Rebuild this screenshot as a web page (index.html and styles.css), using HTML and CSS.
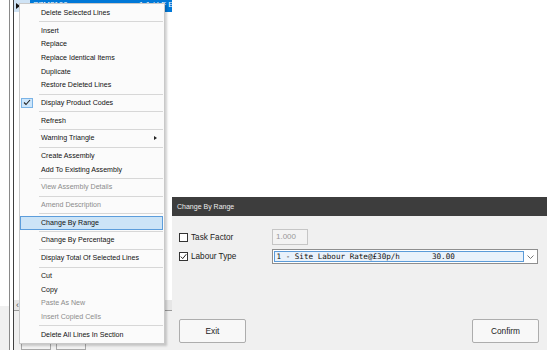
FILE: index.html
```html
<!DOCTYPE html>
<html>
<head>
<meta charset="utf-8">
<link rel="stylesheet" href="styles.css">
</head>
<body>
<div class="app">
  <div class="gutter"><div class="gutter-top"></div><div class="gutter-bottom"></div></div>
  <div class="frame">
    <div class="pane">
      <div class="rows">
        <div class="row selected">
          <div class="rh"><span class="row-arrow"></span></div>
          <div class="cell c1">SZM2100</div>
          <div class="cell c2">1.1 / LF ESD</div>
        </div>
      </div>
      <div class="hscroll"><span class="hs-arrow">‹</span></div>
      <div class="toolbar">
        <div class="tb-btn"><svg width="5" height="8" viewBox="0 0 5 8"><path d="M1 0V8M4 0V8" stroke="#444" stroke-width="1"/></svg></div>
        <div class="tb-btn"><svg width="10" height="8" viewBox="0 0 10 8"><path d="M0.5 0.5L5 7L9.5 0.5" stroke="#444" stroke-width="1" fill="none"/></svg></div>
      </div>
    </div>
  </div>
</div>

<div class="menu">
  <div class="mi">Delete Selected Lines</div>
  <div class="sep"></div>
  <div class="mi">Insert</div>
  <div class="mi">Replace</div>
  <div class="mi">Replace Identical Items</div>
  <div class="mi">Duplicate</div>
  <div class="mi">Restore Deleted Lines</div>
  <div class="sep"></div>
  <div class="mi"><span class="chk"><svg width="8" height="7" viewBox="0 0 8 7"><path d="M1 3.5L3 5.5L7 1" stroke="#222" stroke-width="1.1" fill="none"/></svg></span>Display Product Codes</div>
  <div class="sep"></div>
  <div class="mi">Refresh</div>
  <div class="sep"></div>
  <div class="mi sub">Warning Triangle<span class="sub-arrow"></span></div>
  <div class="sep"></div>
  <div class="mi">Create Assembly</div>
  <div class="mi">Add To Existing Assembly</div>
  <div class="sep"></div>
  <div class="mi disabled">View Assembly Details</div>
  <div class="sep"></div>
  <div class="mi disabled">Amend Description</div>
  <div class="sep"></div>
  <div class="mi hot">Change By Range</div>
  <div class="sep"></div>
  <div class="mi">Change By Percentage</div>
  <div class="sep"></div>
  <div class="mi">Display Total Of Selected Lines</div>
  <div class="sep"></div>
  <div class="mi">Cut</div>
  <div class="mi">Copy</div>
  <div class="mi disabled">Paste As New</div>
  <div class="mi disabled">Insert Copied Cells</div>
  <div class="sep"></div>
  <div class="mi">Delete All Lines In Section</div>
</div>

<div class="dialog">
  <div class="dlg-title">Change By Range</div>
  <div class="dlg-body">
    <div class="form">
      <div class="opt"><span class="cb"></span>Task Factor</div>
      <div class="textbox">1.000</div>
      <div class="opt"><span class="cb"><svg width="7" height="7" viewBox="0 0 7 7"><path d="M0.8 3.6L2.7 5.6L6.3 1.2" stroke="#222" stroke-width="1" fill="none"/></svg></span>Labour Type</div>
      <div class="combo">
        <div class="combo-text">1 - Site Labour Rate@£30p/h       30.00</div>
        <div class="combo-btn"><svg width="7" height="4" viewBox="0 0 7 4"><path d="M0.5 0.5L3.5 3.5L6.5 0.5" stroke="#777" stroke-width="1" fill="none"/></svg></div>
      </div>
    </div>
    <div class="actions">
      <div class="btn">Exit</div>
      <div class="btn">Confirm</div>
    </div>
  </div>
</div>
</body>
</html>
```

FILE: styles.css
```css
html, body {
  margin: 0;
  padding: 0;
}
body {
  width: 547px;
  height: 350px;
  overflow: hidden;
  position: relative;
  background: #ffffff;
  font-family: "Liberation Sans", Arial, sans-serif;
}

/* background grid application */
.app {
  display: flex;
  height: 350px;
}
.gutter {
  width: 9px;
  display: flex;
  flex-direction: column;
}
.gutter-top {
  height: 306px;
  background: #ffffff;
}
.gutter-bottom {
  flex: 1;
  background: #f0f0f0;
}
.frame {
  width: 163px;
  box-sizing: border-box;
  border-left: 1px solid #8a8a8a;
  padding-left: 3px;
  display: flex;
}
.pane {
  flex: 1;
  border-left: 1px solid #404040;
  display: flex;
  flex-direction: column;
  overflow: hidden;
}
.rows {
  height: 306px;
  background: #ffffff;
}
.row {
  display: flex;
  height: 12px;
}
.rh {
  width: 16px;
  background: #cfe3f5;
  position: relative;
}
.row-arrow {
  position: absolute;
  left: 2px;
  top: 3px;
  width: 0;
  height: 0;
  border-left: 4px solid #111;
  border-top: 3px solid transparent;
  border-bottom: 3px solid transparent;
}
.cell {
  background: #0078d7;
  color: #ffffff;
  font-size: 8px;
  line-height: 9px;
  padding-left: 3px;
  white-space: nowrap;
  overflow: hidden;
}
.c1 {
  width: 103px;
}
.c2 {
  flex: 1;
}
.hscroll {
  height: 10px;
  background: #e6e6e6;
  border-bottom: 1px solid #9a9a9a;
  font-size: 9px;
  line-height: 10px;
  color: #555;
}
.hs-arrow {
  padding-left: 2px;
}
.toolbar {
  flex: 1;
  background: #f0f0f0;
  display: flex;
  gap: 5px;
  padding: 15px 0 0 7px;
}
.tb-btn {
  width: 30px;
  height: 24px;
  box-sizing: border-box;
  border: 1px solid #a8a8a8;
  background: #f3f3f3;
  display: flex;
  align-items: center;
  justify-content: center;
}

/* context menu */
.menu {
  position: absolute;
  left: 19px;
  top: 3px;
  width: 146px;
  box-sizing: border-box;
  border: 1px solid #c9c9c9;
  background: #fbfbfb;
  padding: 2px 0;
  box-shadow: 2px 2px 2px rgba(0, 0, 0, 0.18);
  font-size: 7.1px;
  color: #121212;
}
.mi {
  position: relative;
  height: 13.7px;
  padding-left: 21px;
  padding-right: 7px;
  display: flex;
  align-items: center;
  justify-content: space-between;
  white-space: nowrap;
  box-sizing: border-box;
}
.mi.disabled {
  color: #8c8c8c;
}
.mi.hot {
  background: #cce4f7;
  border: 1px solid #5c9ddb;
  margin-right: 1px;
  padding-left: 20px;
}
.sep {
  height: 1px;
  margin: 1.5px 1px 1.5px 19px;
  background: #d7d7d7;
}
.chk {
  position: absolute;
  left: 1px;
  top: 1.5px;
  width: 12px;
  height: 10px;
  box-sizing: border-box;
  background: #cde6fb;
  border: 1px solid #7ab3e6;
  display: flex;
  align-items: center;
  justify-content: center;
}
.sub-arrow {
  width: 0;
  height: 0;
  border-left: 3px solid #222;
  border-top: 2.5px solid transparent;
  border-bottom: 2.5px solid transparent;
}

/* dialog */
.dialog {
  position: absolute;
  left: 172px;
  top: 197px;
  right: 0;
  bottom: 0;
  background: #f0f0f0;
  display: flex;
  flex-direction: column;
}
.dlg-title {
  height: 19px;
  line-height: 19px;
  background: #3d3d3d;
  color: #ececec;
  font-size: 7px;
  padding-left: 5px;
}
.dlg-body {
  flex: 1;
  display: flex;
  flex-direction: column;
}
.form {
  display: grid;
  grid-template-columns: 93px 1fr;
  grid-template-rows: 16px 15px;
  row-gap: 4px;
  align-items: center;
  padding: 13px 9px 0 7px;
}
.opt {
  display: flex;
  align-items: center;
  font-size: 8.2px;
  color: #222;
}
.cb {
  width: 9px;
  height: 9px;
  box-sizing: border-box;
  border: 1px solid #333;
  background: #ffffff;
  margin-right: 3px;
  display: flex;
  align-items: center;
  justify-content: center;
}
.textbox {
  width: 36px;
  height: 16px;
  box-sizing: border-box;
  border: 1px solid #c6c6c6;
  background: #f3f3f3;
  color: #999;
  font-size: 8px;
  line-height: 14px;
  padding-left: 3px;
}
.combo {
  height: 15px;
  box-sizing: border-box;
  border: 1px solid #8e8e8e;
  background: #ffffff;
  display: flex;
}
.combo-text {
  flex: 1;
  margin: 1px 0 1px 1px;
  border: 1px solid #5b9bd8;
  background: #e9f2fb;
  font-family: "DejaVu Sans Mono", "Liberation Mono", monospace;
  font-size: 7.6px;
  line-height: 9px;
  padding-left: 1.5px;
  white-space: pre;
  color: #111;
  overflow: hidden;
}
.combo-btn {
  width: 13px;
  display: flex;
  align-items: center;
  justify-content: center;
}
.actions {
  margin-top: auto;
  display: flex;
  justify-content: space-between;
  padding: 0 8px 7px 7px;
}
.btn {
  width: 67px;
  height: 24px;
  box-sizing: border-box;
  border: 1px solid #adadad;
  border-radius: 2px;
  background: #f8f8f8;
  color: #222;
  font-size: 8.3px;
  display: flex;
  align-items: center;
  justify-content: center;
}
```
